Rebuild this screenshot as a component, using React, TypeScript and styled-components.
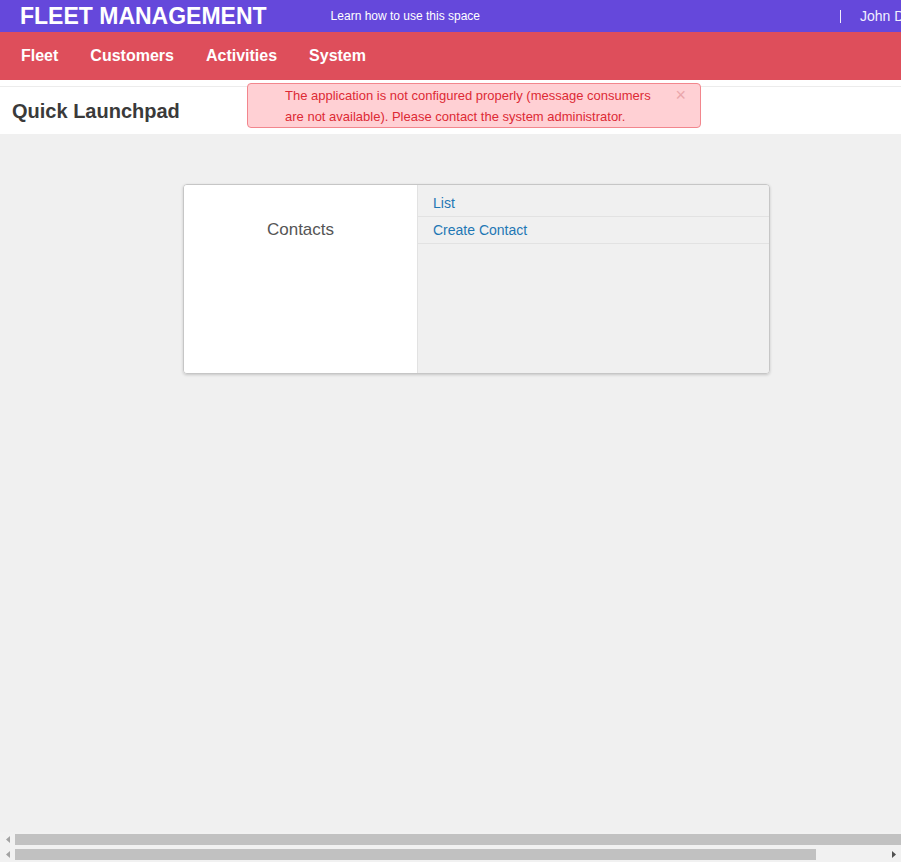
import React from "react";
import styled, { createGlobalStyle } from "styled-components";

const GlobalStyle = createGlobalStyle`
  html, body, #root {
    height: 100%;
  }
  body {
    margin: 0;
    overflow: hidden;
    background: #f0f0f0;
    font-family: "Liberation Sans", Arial, Helvetica, sans-serif;
    color: #333;
  }
`;

const Shell = styled.div`
  display: flex;
  flex-direction: column;
  width: 100%;
  height: 100%;
  overflow: hidden;
`;

const TopBar = styled.header`
  flex: 0 0 32px;
  display: flex;
  align-items: center;
  background: #6548db;
  color: #fff;
`;

const Brand = styled.div`
  margin-left: 20px;
  font-size: 23px;
  font-weight: 700;
  line-height: 32px;
  white-space: nowrap;
`;

const HelpLink = styled.a`
  margin-left: 64px;
  font-size: 12px;
  color: #fff;
  text-decoration: none;
  white-space: nowrap;
`;

const Divider = styled.span`
  margin-left: auto;
  flex: 0 0 1px;
  height: 13px;
  background: #f0eefc;
`;

const UserMenu = styled.div`
  flex: 0 0 60px;
  box-sizing: border-box;
  padding-left: 19px;
  font-size: 14px;
  color: #f1efff;
  white-space: nowrap;
  overflow: hidden;
`;

const NavBar = styled.nav`
  flex: 0 0 48px;
  display: flex;
  padding-left: 5px;
  background: #de4e5b;
`;

const NavItem = styled.a`
  padding: 0 16px;
  line-height: 48px;
  font-size: 16px;
  font-weight: 700;
  color: #fff;
  text-decoration: none;
`;

const Main = styled.main`
  position: relative;
  flex: 1 1 auto;
  min-height: 0;
  overflow: hidden;
`;

const PageHead = styled.div`
  padding-top: 6px;
  background: #fff;
`;

const TitleRow = styled.div`
  display: flex;
  align-items: center;
  height: 46px;
  padding: 1px 0 0 12px;
  border-top: 1px solid #ececec;
`;

const Title = styled.h1`
  margin: 0;
  font-size: 20px;
  font-weight: 700;
  color: #3a3a3a;
`;

const Alert = styled.div`
  position: absolute;
  left: 247px;
  top: 3px;
  width: 454px;
  height: 45px;
  box-sizing: border-box;
  padding: 1px 39px 0 37px;
  border: 1px solid #f2868d;
  border-radius: 4px;
  background: #ffd0d4;
  color: #dd2a35;
  font-size: 13px;
  line-height: 21px;
`;

const CloseButton = styled.span`
  position: absolute;
  right: 14px;
  top: 1px;
  font-size: 18px;
  line-height: 20px;
  color: #eaa6ab;
  cursor: pointer;
`;

const LaunchArea = styled.section`
  padding: 50px 0 0 183px;
`;

const Card = styled.div`
  display: grid;
  grid-template-columns: 233px 1fr;
  width: 587px;
  height: 190px;
  box-sizing: border-box;
  border: 1px solid #c6c6c6;
  border-radius: 4px;
  overflow: hidden;
  box-shadow: 0 1px 3px rgba(0, 0, 0, 0.18);
`;

const CardLabel = styled.div`
  padding-top: 35px;
  background: #fff;
  text-align: center;
  font-size: 17px;
  line-height: 20px;
  color: #555;
`;

const LinkList = styled.ul`
  margin: 0;
  padding: 5px 0 0;
  list-style: none;
  background: #f0f0f0;
  border-left: 1px solid #e2e2e2;
`;

const LinkRow = styled.li`
  display: flex;
  align-items: center;
  height: 26px;
  padding-left: 15px;
  border-bottom: 1px solid #e2e2e2;
`;

const LaunchLink = styled.a`
  font-size: 14px;
  color: #1f77b4;
  text-decoration: none;
`;

const ScrollBar = styled.div`
  flex: 0 0 15px;
  display: flex;
  align-items: center;
  background: #f1f1f1;
`;

const ScrollArrow = styled.span<{ $active?: boolean }>`
  flex: 0 0 15px;
  height: 15px;
  display: flex;
  align-items: center;
  justify-content: center;
  color: ${(p) => (p.$active ? "#505050" : "#a3a3a3")};
`;

const ScrollThumb = styled.div<{ $grow?: boolean }>`
  height: 11px;
  background: #c1c1c1;
  flex: ${(p) => (p.$grow ? "1 0 auto" : "0 0 auto")};
`;

const ScrollGap = styled.div`
  flex: 1 1 auto;
`;

function Arrow({ dir, active }: { dir: "left" | "right"; active?: boolean }) {
  return (
    <ScrollArrow $active={active}>
      <svg width="4" height="7" viewBox="0 0 4 7">
        {dir === "left" ? (
          <polygon points="4,0 4,7 0,3.5" fill="currentColor" />
        ) : (
          <polygon points="0,0 0,7 4,3.5" fill="currentColor" />
        )}
      </svg>
    </ScrollArrow>
  );
}

const navItems = ["Fleet", "Customers", "Activities", "System"];
const links = ["List", "Create Contact"];

export default function App() {
  const pageThumb = 801;
  return (
    <>
      <GlobalStyle />
      <Shell>
        <TopBar>
          <Brand>FLEET MANAGEMENT</Brand>
          <HelpLink href="#">Learn how to use this space</HelpLink>
          <Divider />
          <UserMenu>John Doe</UserMenu>
        </TopBar>
        <NavBar>
          {navItems.map((n) => (
            <NavItem key={n} href="#">
              {n}
            </NavItem>
          ))}
        </NavBar>
        <Main>
          <PageHead>
            <TitleRow>
              <Title>Quick Launchpad</Title>
            </TitleRow>
          </PageHead>
          <Alert>
            The application is not configured properly (message consumers
            are not available). Please contact the system administrator.
            <CloseButton>×</CloseButton>
          </Alert>
          <LaunchArea>
            <Card>
              <CardLabel>Contacts</CardLabel>
              <LinkList>
                {links.map((l) => (
                  <LinkRow key={l}>
                    <LaunchLink href="#">{l}</LaunchLink>
                  </LinkRow>
                ))}
              </LinkList>
            </Card>
          </LaunchArea>
        </Main>
        <ScrollBar>
          <Arrow dir="left" />
          <ScrollThumb $grow />
        </ScrollBar>
        <ScrollBar>
          <Arrow dir="left" />
          <ScrollThumb style={{ width: pageThumb }} />
          <ScrollGap />
          <Arrow dir="right" active />
        </ScrollBar>
      </Shell>
    </>
  );
}
